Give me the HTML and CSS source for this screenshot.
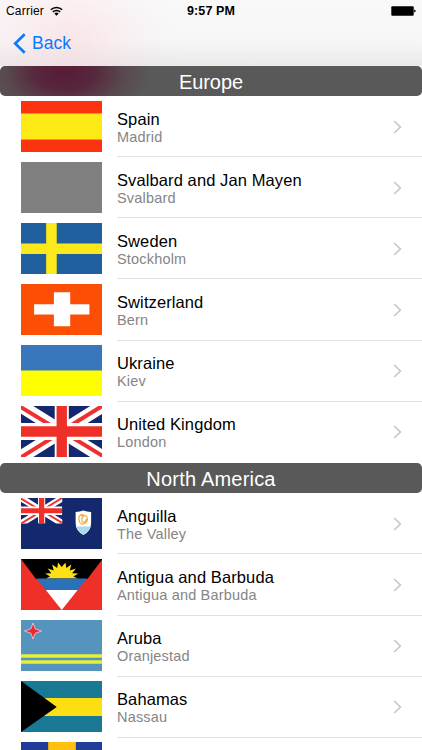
FILE: index.html
```
<!DOCTYPE html>
<html lang="en">
<head>
<meta charset="utf-8">
<meta name="viewport" content="width=device-width">
<title>Countries</title>
<link rel="stylesheet" href="styles.css">
</head>
<body>
<svg class="defs" aria-hidden="true">
  <symbol id="chevron" viewBox="0 0 9 14"><path d="M1.2 1 7.3 7 1.2 13" fill="none" stroke="#c7c7cc" stroke-width="1.7"/></symbol>
  <symbol id="union" viewBox="0 0 81 51" preserveAspectRatio="none">
    <path fill="#14286d" d="M0 0h81v51H0z"/>
    <path d="M0 0 81 51M81 0 0 51" stroke="#fff" stroke-width="13"/>
    <path d="M-2 0 34 22M83 51 47 29M83-1.500 47 21M-2 52.500 34 30" stroke="#ee3030" stroke-width="4"/>
    <path d="M40.500 0v51" stroke="#fff" stroke-width="14"/>
    <path d="M0 25.500h81" stroke="#fff" stroke-width="17"/>
    <path d="M40.500 0v51M0 25.500h81" stroke="#ee3028" stroke-width="10.300"/>
  </symbol>
</svg>
<main class="screen">
  <header class="navbar">
    <div class="status">
      <div class="carrier"><span>Carrier</span>
        <svg class="wifi" viewBox="0 0 13 10"><path d="M.8 3.700a8.200 8.200 0 0 1 11.400 0M2.800 5.900a5.300 5.300 0 0 1 7.400 0" fill="none" stroke="#000" stroke-width="1.500"/><path d="M4.300 7.500a3.200 3.200 0 0 1 4.400 0L6.500 9.700z"/></svg>
      </div>
      <time class="clock">9:57 PM</time>
      <svg class="battery" viewBox="0 0 25 10"><rect x=".3" y=".3" width="22.400" height="9.400" rx="1"/><path d="M23.200 3.500q1.500.2 1.500 1.500t-1.500 1.500z"/></svg>
    </div>
    <a class="back"><svg viewBox="0 0 13 21"><path d="M11.700 1.200 2.200 10.500 11.700 19.800" fill="none" stroke="#087aff" stroke-width="2.700"/></svg><span>Back</span></a>
  </header>
  <h2 class="section tinted">Europe</h2>
  <ul class="list">
    <li class="row"><svg class="flag" viewBox="0 0 81 51" preserveAspectRatio="none"><path fill="#fb3311" d="M0 0h81v51H0z"/><path fill="#f99616" d="M0 12h81v27H0z"/><path fill="#fce916" d="M0 13h81v25H0z"/></svg><div class="cell"><div><b>Spain</b><small>Madrid</small></div><svg class="chev"><use href="#chevron"/></svg></div></li>
    <li class="row"><svg class="flag" viewBox="0 0 81 51" preserveAspectRatio="none"><path fill="#808080" d="M0 0h81v51H0z"/></svg><div class="cell"><div><b>Svalbard and Jan Mayen</b><small>Svalbard</small></div><svg class="chev"><use href="#chevron"/></svg></div></li>
    <li class="row"><svg class="flag" viewBox="0 0 81 51" preserveAspectRatio="none"><path fill="#20609f" d="M0 0h81v51H0z"/><path fill="#fce91c" d="M25 0h10.500v51H25zM0 20.500h81v10.500H0z"/></svg><div class="cell"><div><b>Sweden</b><small>Stockholm</small></div><svg class="chev"><use href="#chevron"/></svg></div></li>
    <li class="row"><svg class="flag" viewBox="0 0 81 51" preserveAspectRatio="none"><path fill="#fc4e05" d="M0 0h81v51H0z"/><path fill="#fff" d="M32.700 8.300h16.200v34H32.700zM13 20.300h55v10.200H13z"/></svg><div class="cell"><div><b>Switzerland</b><small>Bern</small></div><svg class="chev"><use href="#chevron"/></svg></div></li>
    <li class="row"><svg class="flag" viewBox="0 0 81 51" preserveAspectRatio="none"><path fill="#3977bc" d="M0 0h81v26H0z"/><path fill="#ff0" d="M0 25.500h81V51H0z"/></svg><div class="cell"><div><b>Ukraine</b><small>Kiev</small></div><svg class="chev"><use href="#chevron"/></svg></div></li>
    <li class="row"><svg class="flag" viewBox="0 0 81 51" preserveAspectRatio="none"><use href="#union" width="81" height="51"/></svg><div class="cell last"><div><b>United Kingdom</b><small>London</small></div><svg class="chev"><use href="#chevron"/></svg></div></li>
  </ul>
  <h2 class="section">North America</h2>
  <ul class="list">
    <li class="row"><svg class="flag" viewBox="0 0 81 51" preserveAspectRatio="none"><path fill="#14286d" d="M0 0h81v51H0z"/><use href="#union" width="41" height="25.500"/><path fill="#fff" d="M54.300 14q4-.2 7.700-1.500 3.700 1.300 7.700 1.500v11q0 8-7.700 12-7.700-4-7.700-12z"/><path fill="#a9d8ef" d="M55 28.500h14q-1.500 5-7 8-5.500-3-7-8z"/><path d="M62 16.500q-5 0-4.500 5 .5 4 4 5M60 18q6-2 6 3 0 4-4.500 5M63 18q-4 2-2 6 3 1 4-3" fill="none" stroke="#efb451" stroke-width="1.300"/></svg><div class="cell"><div><b>Anguilla</b><small>The Valley</small></div><svg class="chev"><use href="#chevron"/></svg></div></li>
    <li class="row"><svg class="flag" viewBox="0 0 81 51" preserveAspectRatio="none"><path fill="#ee3028" d="M0 0h81v51H0z"/><path d="M0 0h81L66 20H15z"/><path fill="#fde013" d="M24.500 19.500 29 17.500 24 14.500 30.200 14.200 26.500 9.500 32.500 11.500 31 5.500 36 9 36.800 3.500 40.500 8 44.200 3.500 45 9 50 5.500 48.500 11.500 54.500 9.500 50.800 14.200 57 14.500 52 17.500 56.500 19.500z"/><path fill="#2b71b8" d="M15.400 19.500h50.200L56 31.500H25z"/><path fill="#fff" d="M24.700 31h31.600L40.500 51z"/></svg><div class="cell"><div><b>Antigua and Barbuda</b><small>Antigua and Barbuda</small></div><svg class="chev"><use href="#chevron"/></svg></div></li>
    <li class="row"><svg class="flag" viewBox="0 0 81 51" preserveAspectRatio="none"><path fill="#5594bd" d="M0 0h81v51H0z"/><path d="M0 36h81M0 42h81" stroke="#e8f034" stroke-width="3.600"/><path fill="#ee2830" stroke="#f3cbd5" stroke-width=".8" d="m12 3 2.200 5.900L20.500 11l-6.300 2.200L12 19l-2.200-5.800L3.500 11l6.300-2.100z"/></svg><div class="cell"><div><b>Aruba</b><small>Oranjestad</small></div><svg class="chev"><use href="#chevron"/></svg></div></li>
    <li class="row"><svg class="flag" viewBox="0 0 81 51" preserveAspectRatio="none"><path fill="#197894" d="M0 0h81v51H0z"/><path fill="#fbdf13" d="M20 17h61v18H20z"/><path d="M0 0 35.500 26 0 51z"/></svg><div class="cell"><div><b>Bahamas</b><small>Nassau</small></div><svg class="chev"><use href="#chevron"/></svg></div></li>
    <li class="row"><svg class="flag" viewBox="0 0 81 51" preserveAspectRatio="none"><path fill="#213c99" d="M0 0h81v51H0z"/><path fill="#ffc00f" d="M27 0h27.500v51H27z"/></svg><div class="cell"></div></li>
  </ul>
</main>
</body>
</html>
```
FILE: styles.css
```
* { box-sizing: border-box; }
body { margin: 0; background: #fff; color: #000; font-family: "Liberation Sans", Arial, sans-serif; }
.defs { position: absolute; width: 0; height: 0; }
.screen { width: 422px; height: 750px; overflow: hidden; }
.navbar {
  height: 65.500px;
  background:
    radial-gradient(ellipse 110px 80px at 68px 40px, rgba(255, 196, 206, .36), rgba(255, 205, 215, .18) 50%, rgba(255, 215, 225, 0)),
    linear-gradient(#f9f9f9, #f7f7f7 60%, #e9e9e9);
}
.status { display: grid; grid-template-columns: 1fr auto 1fr; height: 22px; padding: 0 6px 0 6px; align-items: center; font-size: 12px; }
.carrier { display: flex; align-items: center; gap: 6px; letter-spacing: .2px; }
.wifi { width: 13px; height: 10px; }
.clock { font-weight: bold; font-size: 12.500px; letter-spacing: .1px; }
.battery { width: 25px; height: 10px; justify-self: end; }
.back { display: flex; align-items: center; gap: 6px; height: 43px; padding-left: 13px; color: #087aff; font-size: 17.500px; }
.back svg { width: 13px; height: 21px; }
.section { margin: 0; height: 30.600px; border-radius: 5px; background: #595959; color: #fff; font-size: 20px; font-weight: normal; line-height: 32px; letter-spacing: .2px; text-align: center; }
.tinted { background: radial-gradient(ellipse 85px 50px at 65px 7px, #571b37, rgba(87, 27, 55, .8) 35%, rgba(87, 50, 65, .4) 70%, rgba(89, 89, 89, 0)), #595959; letter-spacing: -.05px; }
.list { list-style: none; margin: 0; padding: 0; }
.row { display: flex; height: 61.120px; padding-left: 20.500px; }
.flag { flex: none; width: 81.500px; height: 51px; margin: 4.500px 15px 0 0; }
.cell { flex: 1; display: flex; justify-content: space-between; align-items: center; margin-top: 1px; border-bottom: 1px solid #e2e2e4; padding-right: 20px; }
.last { border-color: transparent; }
.cell b, .cell small { position: relative; top: 1.200px; display: block; white-space: nowrap; }
.cell b { font-size: 16.500px; font-weight: normal; line-height: 18px; letter-spacing: .1px; }
.cell small { font-size: 14.500px; line-height: 18px; letter-spacing: .18px; color: #858585; }
.chev { width: 9px; height: 14px; }
```
